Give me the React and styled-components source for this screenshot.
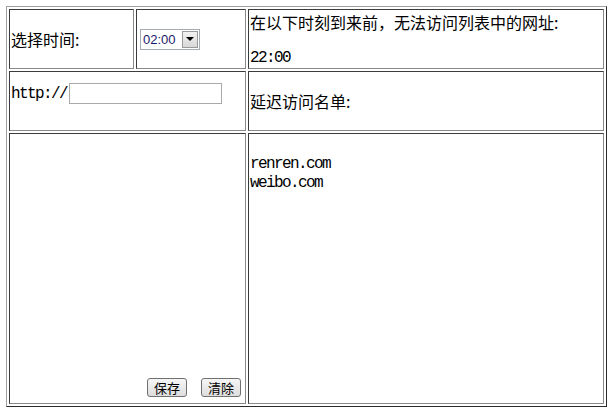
import * as React from 'react'
import styled, { createGlobalStyle } from 'styled-components'

const Global = createGlobalStyle`
  html, body {
    margin: 0;
    padding: 0;
    background: #fff;
  }
  body {
    font-family: "Noto Sans CJK SC", "Liberation Sans", sans-serif;
    font-size: 16px;
    color: #000;
  }
`

const Page = styled.div`
  padding: 6px;
`

const Table = styled.div`
  display: grid;
  grid-template-columns: 125px 110px 356px;
  grid-template-rows: 60px 60px 271px;
  gap: 2px;
  padding: 2px;
  width: 601px;
  box-sizing: border-box;
  border: 1px solid;
  border-color: #a0a0a0 #2b2b2b #2b2b2b #a0a0a0;
`

const Cell = styled.div`
  box-sizing: border-box;
  border: 1px solid;
  border-color: #3c3c3c #8a8a8a #8a8a8a #3c3c3c;
  padding: 1px;
  padding-top: ${p => p.$top || 1}px;
  display: flex;
  flex-direction: column;
  grid-column: ${p => p.$span ? `span ${p.$span}` : 'auto'};
  justify-content: ${p => p.$align || 'center'};
  align-items: flex-start;
`

const Line = styled.div`
  line-height: 19px;
  white-space: nowrap;
  margin-top: ${p => p.$gap || 0}px;
`

const MonoLine = styled.div`
  font-family: "Liberation Mono", "DejaVu Sans Mono", monospace;
  font-size: 16px;
  line-height: 19px;
  letter-spacing: -1.6px;
  white-space: nowrap;
  margin-top: ${p => p.$gap || 0}px;
`

const Select = styled.div`
  display: flex;
  align-items: center;
  width: 60px;
  height: 21px;
  margin-left: 2px;
  box-sizing: border-box;
  border: 1px solid #a5acb5;
  background: #fff;
  font-family: "Liberation Sans", Arial, sans-serif;
  font-size: 13px;
  color: #1a1a6a;
`

const SelectValue = styled.span`
  flex: 1;
  padding-left: 2px;
`

const SelectArrow = styled.div`
  width: 16px;
  height: 17px;
  margin-right: 1px;
  box-sizing: border-box;
  border: 1px solid #9a9a9a;
  background: linear-gradient(#f2f2f2, #d8d8d8);
  display: flex;
  align-items: center;
  justify-content: center;
  &::after {
    content: '';
    border-left: 4px solid transparent;
    border-right: 4px solid transparent;
    border-top: 4px solid #000;
  }
`

const UrlRow = styled.div`
  display: flex;
  align-items: center;
  gap: 2px;
  margin-top: -15px;
`

const UrlLabel = styled.span`
  font-family: "Liberation Mono", "DejaVu Sans Mono", monospace;
  font-size: 16px;
  letter-spacing: -1.6px;
`

const Input = styled.input`
  width: 153px;
  height: 21px;
  box-sizing: border-box;
  border: 1px solid #a9a9a9;
  padding: 0 2px;
  margin: 0;
  outline: none;
`

const Buttons = styled.div`
  align-self: flex-end;
  display: flex;
  gap: 14px;
  margin: 0 3px 5px 0;
`

const Button = styled.button`
  width: 40px;
  height: 19px;
  padding: 0;
  box-sizing: border-box;
  border: 1px solid #707070;
  border-radius: 3px;
  background: linear-gradient(#f6f6f6, #dddddd);
  font-family: "Noto Sans CJK SC", sans-serif;
  font-size: 13px;
  line-height: 16px;
  color: #000;
`

export default function App() {
  return (
    <Page>
      <Global />
      <Table>
        <Cell>
          <Line>选择时间:</Line>
        </Cell>
        <Cell>
          <Select>
            <SelectValue>02:00</SelectValue>
            <SelectArrow />
          </Select>
        </Cell>
        <Cell $align='flex-start' $top={3}>
          <Line>在以下时刻到来前，无法访问列表中的网址:</Line>
          <MonoLine $gap={17}>22:00</MonoLine>
        </Cell>
        <Cell $span={2}>
          <UrlRow>
            <UrlLabel>http://</UrlLabel>
            <Input type='text' />
          </UrlRow>
        </Cell>
        <Cell>
          <Line>延迟访问名单:</Line>
        </Cell>
        <Cell $span={2} $align='flex-end'>
          <Buttons>
            <Button>保存</Button>
            <Button>清除</Button>
          </Buttons>
        </Cell>
        <Cell $align='flex-start' $top={21}>
          <MonoLine>renren.com</MonoLine>
          <MonoLine>weibo.com</MonoLine>
        </Cell>
      </Table>
    </Page>
  )
}
